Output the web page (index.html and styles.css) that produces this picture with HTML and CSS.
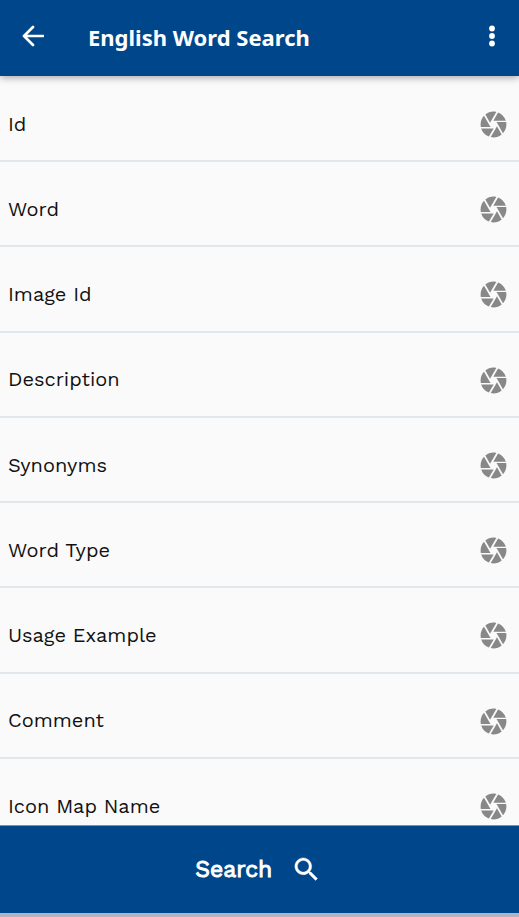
FILE: index.html
```html
<!DOCTYPE html>
<html lang="en">
<head>
<meta charset="utf-8">
<title>English Word Search</title>
<link rel="stylesheet" href="styles.css">
</head>
<body>
<svg class="defs" aria-hidden="true"><symbol id="shutter" viewBox="0 0 24 24"><path d="M9.4 10.5l4.77-8.26C13.47 2.09 12.75 2 12 2c-2.4 0-4.6.85-6.32 2.25l3.66 6.35.06-.1zM21.54 9c-.92-2.92-3.15-5.26-6-6.34L11.88 9h9.66zm.26 1h-7.49l.29.5 4.76 8.25C21 16.97 22 14.61 22 12c0-.69-.07-1.35-.2-2zM8.54 12l-3.9-6.75C3.01 7.03 2 9.39 2 12c0 .69.07 1.35.2 2h7.49l-1.15-2zm-6.08 3c.92 2.92 3.15 5.26 6 6.34L12.12 15H2.46zm11.27 0l-3.9 6.76c.7.15 1.42.24 2.17.24 2.4 0 4.6-.85 6.32-2.25l-3.66-6.35-.93 1.6z"/></symbol></svg>
<div class="app">
<header class="bar">
<svg class="back" viewBox="0 0 22 22"><path d="M21 11H2M11 2L2 11l9 9"/></svg>
<h1 class="title">English Word Search</h1>
<svg class="more" viewBox="0 0 8 22"><circle cx="4" cy="3.5" r="2.9"/><circle cx="4" cy="11" r="2.9"/><circle cx="4" cy="18.5" r="2.9"/></svg>
</header>
<main class="list">
<div class="row"><span class="label">Id</span><svg class="icon"><use href="#shutter"/></svg></div>
<div class="row"><span class="label">Word</span><svg class="icon"><use href="#shutter"/></svg></div>
<div class="row"><span class="label">Image Id</span><svg class="icon"><use href="#shutter"/></svg></div>
<div class="row"><span class="label">Description</span><svg class="icon"><use href="#shutter"/></svg></div>
<div class="row"><span class="label">Synonyms</span><svg class="icon"><use href="#shutter"/></svg></div>
<div class="row"><span class="label">Word Type</span><svg class="icon"><use href="#shutter"/></svg></div>
<div class="row"><span class="label">Usage Example</span><svg class="icon"><use href="#shutter"/></svg></div>
<div class="row"><span class="label">Comment</span><svg class="icon"><use href="#shutter"/></svg></div>
<div class="row"><span class="label">Icon Map Name</span><svg class="icon"><use href="#shutter"/></svg></div>
</main>
<footer class="search">
<span class="search-text">Search</span>
<svg class="glass" viewBox="0 0 24 24"><path d="M15.5 14h-.79l-.28-.27C15.41 12.59 16 11.11 16 9.5 16 5.91 13.09 3 9.5 3S3 5.91 3 9.5 5.91 16 9.5 16c1.61 0 3.09-.59 4.23-1.57l.27.28v.79l5 4.99L20.49 19l-4.99-5zm-6 0C7.01 14 5 11.99 5 9.5S7.01 5 9.5 5 14 7.01 14 9.5 11.99 14 9.5 14z"/></svg>
</footer>
</div>
</body>
</html>
```
FILE: styles.css
```css
* { box-sizing: border-box; }
body { margin: 0; background: #b3b8c8; }
.defs { position: absolute; width: 0; height: 0; }
.app { height: 917px; display: flex; flex-direction: column; overflow: hidden; }
.bar {
  flex: 0 0 76px;
  display: flex;
  align-items: center;
  padding: 0 23.5px 4px 22px;
  background: #00468b;
  box-shadow: 0 1px 8px rgba(0, 0, 0, .4);
  z-index: 1;
}
.back { width: 22px; height: 22px; fill: none; stroke: #fff; stroke-width: 2.7; stroke-linecap: round; stroke-linejoin: round; }
.title {
  margin: 2px auto 0 44px;
  font: 700 22px/30px "Noto Sans", sans-serif;
  color: #fff;
  white-space: nowrap;
}
.more { width: 8px; height: 22px; fill: #fff; }
.list { flex: 1 1 0; min-height: 0; overflow: hidden; padding-top: .8px; background: #fafafa; }
.row {
  height: 85.25px;
  display: flex;
  align-items: center;
  justify-content: space-between;
  padding: 11px 9.6px 0 8px;
  border-bottom: 2px solid #e2e7eb;
}
.label { margin-bottom: .5px; font: 400 20px/28px "Work Sans", Inter, sans-serif; color: #111; white-space: nowrap; }
.icon { width: 31px; height: 31px; margin-top: 1px; fill: #888; }
.search {
  flex: 0 0 92px;
  display: flex;
  align-items: center;
  justify-content: center;
  gap: 18.5px;
  padding: 0 2px 1px 0;
  background: #00468b;
  border-top: 1px solid #6f94b8;
  border-bottom: 4px solid #b0b4c3;
}
.search-text { margin-top: 2px; font: 400 23px/30px "Work Sans", Inter, sans-serif; color: #fff; -webkit-text-stroke: 1px #fff; }
.glass { width: 31px; height: 31px; fill: #fff; stroke: #fff; stroke-width: .3; }
```
